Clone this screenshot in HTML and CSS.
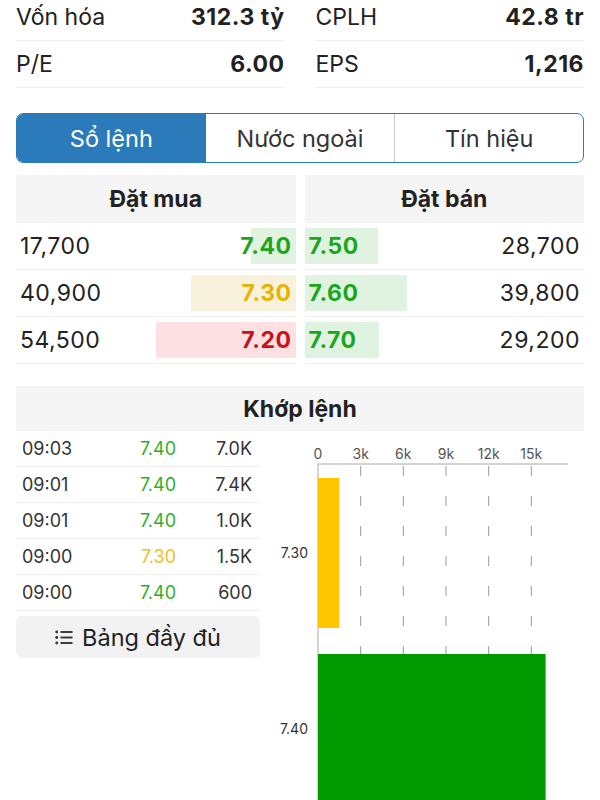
FILE: index.html
```html
<!DOCTYPE html>
<html lang="vi">
<head>
    <meta charset="UTF-8">
    <meta name="viewport" content="width=device-width, initial-scale=1.0">
    <title>Sổ lệnh</title>
    <link rel="stylesheet" href="styles.css">
</head>
<body>

<div class="page">
    <div class="stats">
        <div class="stat"><span>Vốn hóa</span><b>312.3 tỷ</b></div>
        <div class="stat"><span>CPLH</span><b>42.8 tr</b></div>
        <div class="stat"><span>P/E</span><b>6.00</b></div>
        <div class="stat"><span>EPS</span><b>1,216</b></div>
    </div>

    <div class="tabs">
        <div class="tab active">Sổ lệnh</div>
        <div class="tab">Nước ngoài</div>
        <div class="tab">Tín hiệu</div>
    </div>

    <div class="book">
        <div class="book-side">
            <div class="book-head">Đặt mua</div>
            <div class="book-row">
                <span class="qty">17,700</span>
                <span class="price bid up" style="width: 16.1%">7.40</span>
            </div>
            <div class="book-row">
                <span class="qty">40,900</span>
                <span class="price bid ref" style="width: 37.5%">7.30</span>
            </div>
            <div class="book-row">
                <span class="qty">54,500</span>
                <span class="price bid down" style="width: 50%">7.20</span>
            </div>
        </div>
        <div class="book-side">
            <div class="book-head">Đặt bán</div>
            <div class="book-row">
                <span class="price ask up" style="width: 26.3%">7.50</span>
                <span class="qty">28,700</span>
            </div>
            <div class="book-row">
                <span class="price ask up" style="width: 36.5%">7.60</span>
                <span class="qty">39,800</span>
            </div>
            <div class="book-row">
                <span class="price ask up" style="width: 26.8%">7.70</span>
                <span class="qty">29,200</span>
            </div>
        </div>
    </div>

    <div class="match">
        <div class="match-head">Khớp lệnh</div>
        <div class="match-body">
            <div class="trades">
                <div class="trade"><span>09:03</span><span class="t-up">7.40</span><span>7.0K</span></div>
                <div class="trade"><span>09:01</span><span class="t-up">7.40</span><span>7.4K</span></div>
                <div class="trade"><span>09:01</span><span class="t-up">7.40</span><span>1.0K</span></div>
                <div class="trade"><span>09:00</span><span class="t-ref">7.30</span><span>1.5K</span></div>
                <div class="trade"><span>09:00</span><span class="t-up">7.40</span><span>600</span></div>
                <button class="full-btn" type="button">
                    <svg class="list-icon" width="18" height="15" viewBox="0 0 18 15">
                        <circle cx="1.7" cy="2" r="1.4"/>
                        <circle cx="1.7" cy="7.5" r="1.4"/>
                        <circle cx="1.7" cy="13" r="1.4"/>
                        <line x1="5.5" y1="2" x2="17.5" y2="2"/>
                        <line x1="5.5" y1="7.5" x2="17.5" y2="7.5"/>
                        <line x1="5.5" y1="13" x2="17.5" y2="13"/>
                    </svg>
                    Bảng đầy đủ
                </button>
            </div>

            <!-- khối lượng khớp theo giá, 3k = 42.67px -->
            <svg class="chart" width="324" height="380" viewBox="0 0 324 380">
                <g class="grid">
                    <line x1="100.7" y1="35" x2="100.7" y2="380"/>
                    <line x1="143.3" y1="35" x2="143.3" y2="380"/>
                    <line x1="186" y1="35" x2="186" y2="380"/>
                    <line x1="228.7" y1="35" x2="228.7" y2="380"/>
                    <line x1="271.3" y1="35" x2="271.3" y2="380"/>
                </g>
                <line class="axis" x1="58" y1="33" x2="308" y2="33"/>
                <line class="axis" x1="58" y1="33" x2="58" y2="380"/>
                <g class="tick">
                    <text x="58" y="28">0</text>
                    <text x="100.7" y="28">3k</text>
                    <text x="143.3" y="28">6k</text>
                    <text x="186" y="28">9k</text>
                    <text x="228.7" y="28">12k</text>
                    <text x="271.3" y="28">15k</text>
                </g>
                <rect class="bar-ref" x="58" y="47" width="21.3" height="150"/>
                <rect class="bar-up" x="58" y="223" width="227.6" height="150"/>
                <g class="cat">
                    <text x="48" y="127">7.30</text>
                    <text x="48" y="303">7.40</text>
                </g>
            </svg>
        </div>
    </div>
</div>

</body>
</html>
```

FILE: styles.css
```css
body {
    margin: 0;
    font-family: 'Inter', 'Liberation Sans', sans-serif;
    color: #222;
    background-color: #FFFFFF;
}
.page {
    padding: 0 16px;
}

/* chỉ số */
.stats {
    display: grid;
    grid-template-columns: 1fr 1fr;
    column-gap: 31px;
    margin-top: -6px;
}
.stat {
    height: 46px;
    border-bottom: 1px solid #EEEEEE;
    display: flex;
    justify-content: space-between;
    align-items: center;
    font-size: 23px;
}
.stat b {
    font-weight: 700;
    letter-spacing: 0.5px;
}

/* tabs */
.tabs {
    margin-top: 25px;
    display: grid;
    grid-template-columns: 1fr 1fr 1fr;
    height: 50px;
    box-sizing: border-box;
    border: 1px solid #2B7BBA;
    border-radius: 7px;
    overflow: hidden;
}
.tab {
    display: flex;
    justify-content: center;
    align-items: center;
    font-size: 23.5px;
    color: #333;
    border-left: 1px solid #CCCCCC;
}
.tab:first-child {
    border-left: none;
}
.tab.active {
    background-color: #2B7BBA;
    color: #FFFFFF;
}
.tab.active + .tab {
    border-left: none;
}

/* sổ lệnh */
.book {
    margin-top: 12px;
    display: grid;
    grid-template-columns: 1fr 1fr;
    column-gap: 9px;
}
.book-head {
    height: 48px;
    background-color: #F5F5F5;
    display: flex;
    justify-content: center;
    align-items: center;
    font-size: 23px;
    font-weight: 700;
}
.book-row {
    height: 46px;
    border-bottom: 1px solid #F0F0F0;
    display: flex;
    justify-content: space-between;
    align-items: center;
    font-size: 23px;
    letter-spacing: 0.5px;
}
.book-side:first-child .qty {
    padding-left: 4px;
}
.book-side:last-child .qty {
    padding-right: 4px;
}
.price {
    height: 36px;
    display: flex;
    align-items: center;
    box-sizing: border-box;
    font-weight: 700;
    white-space: nowrap;
}
.price.bid {
    justify-content: flex-end;
    padding-right: 4px;
}
.price.ask {
    justify-content: flex-start;
    padding-left: 4px;
}
.price.up {
    color: #1DA61D;
    background-color: #E0F3E0;
}
.price.ref {
    color: #E8B200;
    background-color: #F8F2DC;
}
.price.down {
    color: #C8101E;
    background-color: #FDE0E2;
}

/* khớp lệnh */
.match {
    margin-top: 22px;
}
.match-head {
    height: 45px;
    background-color: #F5F5F5;
    display: flex;
    justify-content: center;
    align-items: center;
    font-size: 23px;
    font-weight: 700;
}
.match-body {
    display: grid;
    grid-template-columns: 244px 1fr;
}
.trade {
    height: 35px;
    border-bottom: 1px solid #F0F0F0;
    display: grid;
    grid-template-columns: 100px 1fr 76px;
    align-items: center;
    padding: 0 8px 0 6px;
    font-size: 18px;
    color: #333;
}
.trade span:nth-child(2),
.trade span:nth-child(3) {
    text-align: right;
}
.t-up {
    color: #2DB02D;
}
.t-ref {
    color: #EFC020;
}
.full-btn {
    margin-top: 5px;
    width: 100%;
    height: 42px;
    border: none;
    border-radius: 6px;
    background-color: #F2F2F2;
    font-family: inherit;
    font-size: 23.5px;
    color: #222;
    display: flex;
    justify-content: center;
    align-items: center;
    gap: 9px;
}
.list-icon {
    fill: #333;
    stroke: #333;
}
.list-icon circle {
    stroke: none;
}
.list-icon line {
    stroke-width: 1.9;
}

/* biểu đồ */
.chart {
    display: block;
}
.chart .grid line {
    stroke: #999;
    stroke-width: 1;
    stroke-dasharray: 10 20;
}
.chart .axis {
    stroke: #AAAAAA;
    stroke-width: 1;
}
.chart .tick text {
    font-size: 14px;
    fill: #555;
    text-anchor: middle;
}
.chart .cat text {
    font-size: 14px;
    fill: #333;
    text-anchor: end;
}
.bar-ref {
    fill: #FFC600;
}
.bar-up {
    fill: #009900;
}
```
